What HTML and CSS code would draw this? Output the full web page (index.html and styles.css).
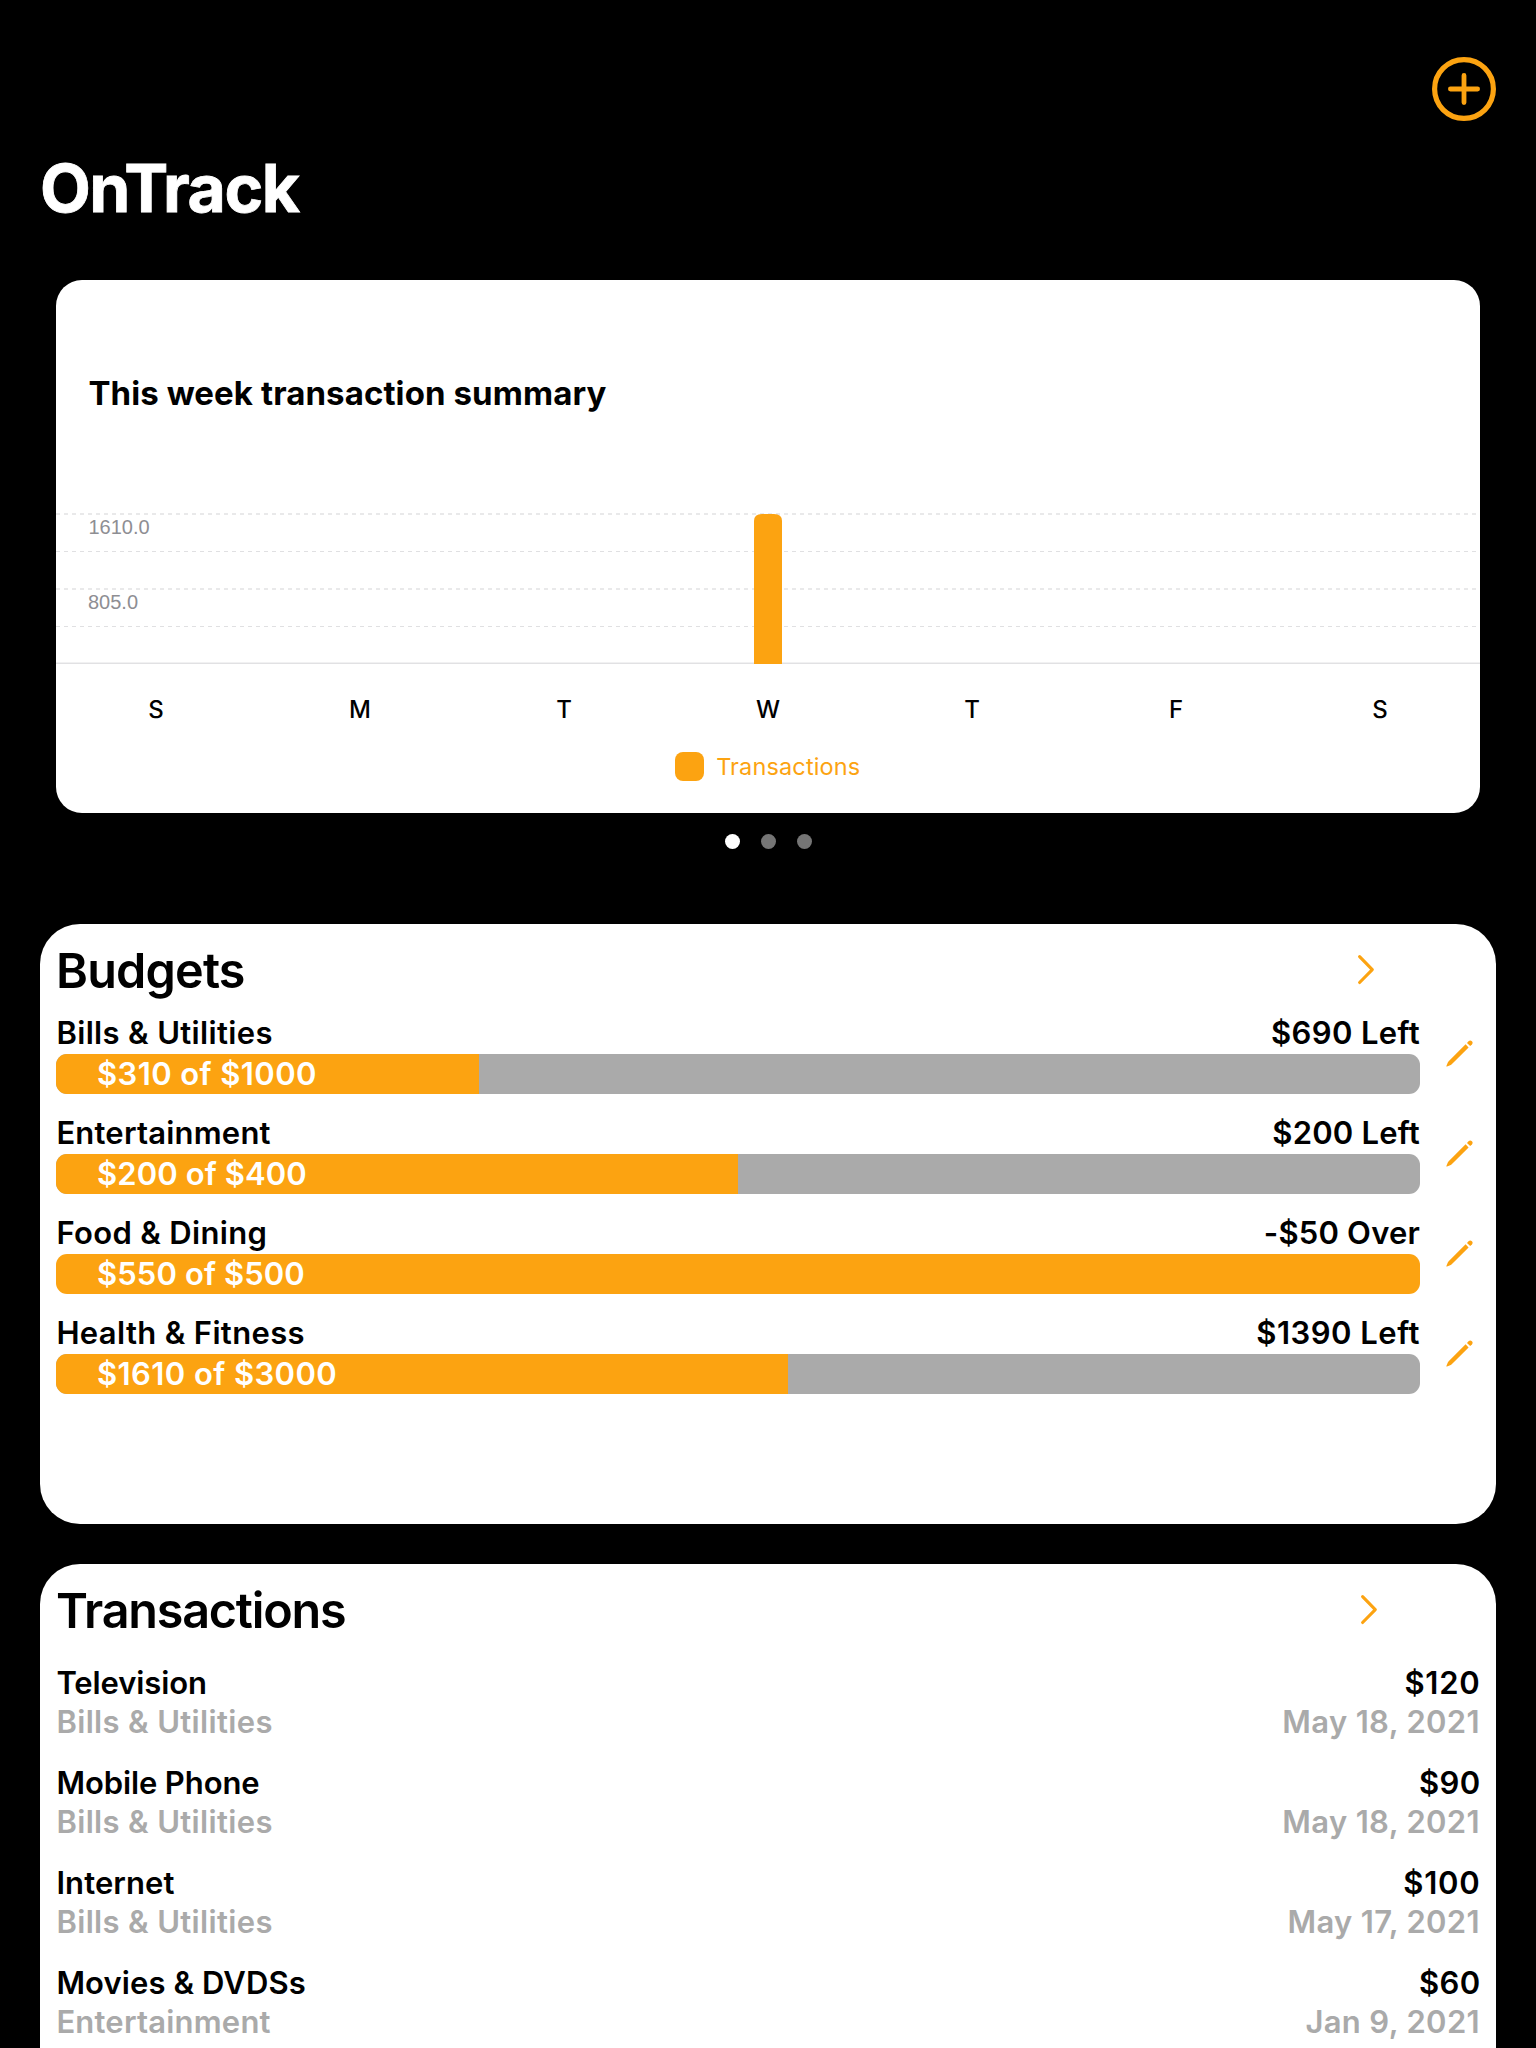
FILE: index.html
```
<!DOCTYPE html>
<html lang="en">
<head>
<meta charset="utf-8">
<title>OnTrack</title>
<link rel="stylesheet" href="styles.css">
</head>
<body>
<svg width="0" height="0" class="defs" aria-hidden="true">
  <symbol id="chevron" viewBox="0 0 20 32"><path d="M2.600 2.700 L15.300 15.600 L2.600 28.500" fill="none" stroke="currentColor" stroke-width="3.1" stroke-linecap="round" stroke-linejoin="round"/></symbol>
  <symbol id="pencil" viewBox="0 0 28 28">
    <path d="M19.600 4.300 L22.600 7.400 L6 24 Q5.200 24.800 4.200 25.200 L1 26.500 Q0.100 26.800 0.400 25.900 L1.800 22.600 Q2.200 21.600 2.900 20.900 Z" fill="currentColor"/>
    <path d="M21 3 L22.500 1.300 Q24.200 -0.100 25.900 1.200 Q27.300 2.800 25.900 4.500 L24.200 6 Z" fill="currentColor"/>
  </symbol>
</svg>
<main class="screen">
  <header class="topbar">
    <button class="add" aria-label="Add">
      <svg width="64" height="64" viewBox="0 0 64 64" fill="none" stroke="currentColor">
        <circle cx="32" cy="32" r="29.4" stroke-width="5.2"/>
        <path d="M32 18.4 V45.6 M18.4 32 H45.6" stroke-width="4.8" stroke-linecap="round"/>
      </svg>
    </button>
  </header>
  <h1 class="app-title">OnTrack</h1>

  <section class="summary">
    <h2 class="summary-title">This week transaction summary</h2>
    <svg class="plot" width="1424" height="151" viewBox="0 0 1424 151">
      <g class="grid">
        <path d="M0 1 H1424" stroke-width="2"/>
        <path class="thin" d="M0 38.5 H1424" stroke-width="1"/>
        <path d="M0 76 H1424" stroke-width="2"/>
        <path class="thin" d="M0 113.5 H1424" stroke-width="1"/>
      </g>
      <rect class="axis" x="0" y="150" width="1424" height="1"/>
      <rect class="axis soft" x="0" y="149" width="1424" height="1"/>
      <path class="bar" d="M698 151 V8 Q698 1 706 1 H718 Q726 1 726 8 V151 Z"/>
      <text class="tick" x="32.500" y="21">1610.0</text>
      <text class="tick" x="32" y="96">805.0</text>
    </svg>
    <div class="days"><span>S</span><span>M</span><span>T</span><span>W</span><span>T</span><span>F</span><span>S</span></div>
    <div class="legend"><span class="swatch"></span><span>Transactions</span></div>
  </section>
  <div class="pager"><span class="dot current"></span><span class="dot"></span><span class="dot"></span></div>

  <section class="card budgets">
    <div class="card-head"><h2 class="card-title">Budgets</h2><svg class="chevron" width="20" height="32"><use href="#chevron"/></svg></div>
    <ul class="budget-list">
      <li class="budget">
        <div class="budget-main">
          <div class="line"><span>Bills &amp; Utilities</span><span>$690 Left</span></div>
          <div class="track"><div class="fill" style="width:31%"><span class="spent wide">$310 of $1000</span></div></div>
        </div>
        <svg class="pencil" width="28" height="28"><use href="#pencil"/></svg>
      </li>
      <li class="budget">
        <div class="budget-main">
          <div class="line"><span class="snug">Entertainment</span><span class="snug">$200 Left</span></div>
          <div class="track"><div class="fill" style="width:50%"><span class="spent">$200 of $400</span></div></div>
        </div>
        <svg class="pencil" width="28" height="28"><use href="#pencil"/></svg>
      </li>
      <li class="budget">
        <div class="budget-main">
          <div class="line"><span>Food &amp; Dining</span><span class="snug">-$50 Over</span></div>
          <div class="track"><div class="fill" style="width:100%"><span class="spent">$550 of $500</span></div></div>
        </div>
        <svg class="pencil" width="28" height="28"><use href="#pencil"/></svg>
      </li>
      <li class="budget">
        <div class="budget-main">
          <div class="line"><span>Health &amp; Fitness</span><span class="wider">$1390 Left</span></div>
          <div class="track"><div class="fill" style="width:53.67%"><span class="spent wide">$1610 of $3000</span></div></div>
        </div>
        <svg class="pencil" width="28" height="28"><use href="#pencil"/></svg>
      </li>
    </ul>
  </section>

  <section class="card transactions">
    <div class="card-head"><h2 class="card-title long">Transactions</h2><svg class="chevron" width="20" height="32"><use href="#chevron"/></svg></div>
    <ul class="transaction-list">
      <li class="transaction">
        <div class="line name"><span class="tight">Television</span><span class="amount widest">$120</span></div>
        <div class="line detail"><span>Bills &amp; Utilities</span><span>May 18, 2021</span></div>
      </li>
      <li class="transaction">
        <div class="line name"><span class="tight">Mobile Phone</span><span class="amount">$90</span></div>
        <div class="line detail"><span>Bills &amp; Utilities</span><span>May 18, 2021</span></div>
      </li>
      <li class="transaction">
        <div class="line name"><span>Internet</span><span class="amount widest">$100</span></div>
        <div class="line detail"><span>Bills &amp; Utilities</span><span>May 17, 2021</span></div>
      </li>
      <li class="transaction">
        <div class="line name"><span>Movies &amp; DVDSs</span><span class="amount">$60</span></div>
        <div class="line detail"><span class="snug">Entertainment</span><span>Jan 9, 2021</span></div>
      </li>
    </ul>
  </section>
</main>
</body>
</html>
```
FILE: styles.css
```
* { box-sizing: border-box; margin: 0; padding: 0; }

body {
  height: 2048px;
  overflow: hidden;
  background: #000;
  font-family: Inter, "Liberation Sans", sans-serif;
  font-size: 31px;
  font-weight: 600;
  color: #000;
}

ul { list-style: none; }
.defs { display: block; }

.screen { height: 2048px; padding: 57px 40px 0; overflow: hidden; }

.topbar { display: flex; justify-content: flex-end; height: 64px; }
.add { width: 64px; height: 64px; border: 0; background: none; color: #fca311; }
.add svg { display: block; }

.app-title {
  margin-top: 27px;
  font-size: 66px;
  line-height: 80px;
  font-weight: 700;
  letter-spacing: -1.5px;
  color: #fff;
  -webkit-text-stroke: 0.8px #fff;
}

/* Weekly chart */
.summary {
  height: 533px;
  margin: 52px 16px 0;
  padding-top: 93px;
  border-radius: 26px;
  background: #fff;
  overflow: hidden;
}
.summary-title {
  padding-left: 32.4px;
  font-size: 33px;
  line-height: 40px;
  font-weight: 700;
  letter-spacing: 0.09px;
}
.plot { display: block; margin-top: 100px; }
.grid path { stroke: #e9e9ea; stroke-dasharray: 4 4; }
.grid .thin { stroke: #e0e0e2; shape-rendering: crispEdges; }
.axis { fill: #e1e1e3; }
.axis.soft { fill: #f1f1f2; }
.bar { fill: #fca311; }
.tick { font: 20px "Liberation Sans", Arial, sans-serif; fill: #8e8e93; }

.days {
  display: grid;
  grid-template-columns: repeat(7, 204px);
  justify-content: center;
  margin-top: 30px;
  font-size: 24px;
  font-weight: 500;
  line-height: 32px;
  text-align: center;
}
.legend {
  display: flex;
  align-items: center;
  justify-content: center;
  gap: 12.5px;
  margin-top: 26px;
  padding-right: 1px;
  height: 29px;
  font-size: 23.5px;
  font-weight: 400;
  letter-spacing: 0.14px;
  color: #fca311;
}
.swatch { width: 29px; height: 29px; border-radius: 8px; background: #fca311; }

.pager { display: flex; justify-content: center; gap: 21px; margin-top: 21px; }
.dot { width: 15px; height: 15px; border-radius: 50%; background: #757575; }
.dot.current { background: #fff; }

/* Cards */
.card { height: 600px; padding: 16px; border-radius: 40px; background: #fff; }
.budgets { margin-top: 75px; }
.transactions { height: 484px; margin-top: 40px; border-radius: 40px 40px 0 0; overflow: hidden; }

.card-head {
  display: flex;
  align-items: center;
  justify-content: space-between;
  height: 60px;
  padding-right: 103px;
}
.transactions .card-head { padding-right: 100px; }
.card-title {
  padding-top: 2px;
  font-size: 48.5px;
  line-height: 60px;
  font-weight: 600;
  letter-spacing: -0.8px;
}
.card-title.long { letter-spacing: -1.22px; }
.chevron { color: #fca311; }

.line {
  display: flex;
  justify-content: space-between;
  padding-left: 0.4px;
  line-height: 38px;
  letter-spacing: 0.35px;
}

.budget-list { display: grid; gap: 20px; margin-top: 14px; }
.budget { display: flex; gap: 26px; height: 80px; }
.budget-main { width: 1364px; }
.track {
  height: 40px;
  margin-top: 2px;
  border-radius: 11px;
  background: #aaa;
  overflow: hidden;
}
.fill { height: 40px; padding-left: 41px; background: #fca311; }
.spent { color: #fff; line-height: 40px; letter-spacing: 0.1px; white-space: nowrap; }
.pencil { margin-top: 26px; color: #fca311; }

.transaction-list { display: grid; gap: 22px; margin-top: 23px; }
.transaction .line { line-height: 39px; }
.transaction .name { letter-spacing: 0.1px; }
.detail { color: #aaa; }
.amount { margin-right: -0.5px; letter-spacing: 0.35px; }

.tight { letter-spacing: -0.1px; }
.snug { letter-spacing: 0.2px; }
.wide { letter-spacing: 0.41px; }
.wider { letter-spacing: 0.5px; }
.widest { letter-spacing: 0.75px; }
```
